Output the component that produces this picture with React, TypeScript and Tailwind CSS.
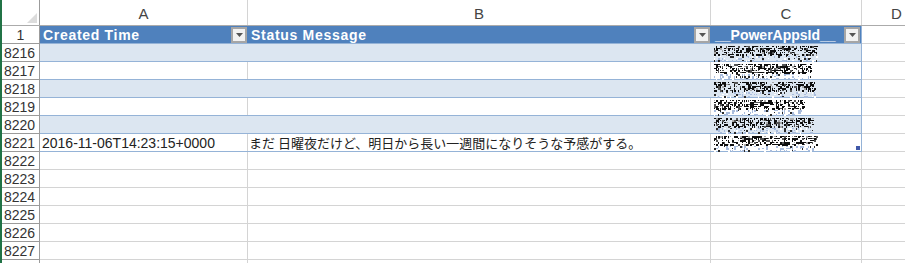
import React from "react";

// column widths: row header, A, B, C, D
const W = { rh: "w-[38px]", a: "w-[208px]", b: "w-[463px]", c: "w-[151px]", d: "w-[70px]" };

function rng(seed: number) {
  let s = seed;
  return () => {
    s = (s * 1103515245 + 12345) & 0x7fffffff;
    return s / 0x7fffffff;
  };
}

// pixelated noise that hides the ids in column C
function Noise({ seed, len }: { seed: number; len: number }) {
  const r = rng(seed);
  const px: React.ReactNode[] = [];
  for (let y = 2; y < 18; y += 2) {
    for (let x = 0; x < len; x += 2) {
      const v = r();
      let fill = "";
      if (y <= 11) {
        if (v < 0.55) fill = "#0e0e0e";
        else if (v < 0.68) fill = "#555";
        else if (v < 0.76) fill = "#a8a8a8";
      } else {
        if (v < 0.25) fill = "#a9bcdc";
        else if (v < 0.4) fill = "#ffffff";
        else if (v < 0.5) fill = "#2a2a2a";
      }
      if (!fill) continue;
      const w = r() < 0.4 ? 1 : 2;
      const h = r() < 0.4 ? 1 : 2;
      px.push(<rect key={`${x}-${y}`} x={x} y={y} width={w} height={h} fill={fill} />);
    }
  }
  return (
    <svg width={len} height={18} className="absolute left-[3px] top-0 overflow-visible" shapeRendering="crispEdges">
      {px}
    </svg>
  );
}

function Drop() {
  return (
    <div className="ml-auto mr-[1px] flex h-[16px] w-[16px] shrink-0 items-center justify-center border-2 border-[#a6a6a6] bg-[#f2f2f2]">
      <svg width="7" height="4" viewBox="0 0 7 4">
        <path d="M0 0h7L3.5 4z" fill="#555" />
      </svg>
    </div>
  );
}

const rows = [8216, 8217, 8218, 8219, 8220, 8221, 8222, 8223, 8224, 8225, 8226, 8227, 0];

export default function App() {
  return (
    <div className="h-[263px] w-[905px] overflow-hidden bg-white font-['Liberation_Sans','Noto_Sans_CJK_JP',sans-serif] text-[14px] leading-none text-[#222]">
      <div className="border-l-2 border-[#217346]">
        {/* column letters */}
        <div className="flex h-[26px] border-b border-[#ababab] text-[15px] text-[#444]">
          <div className={`${W.rh} relative shrink-0 border-r border-[#9b9b9b]`}>
            <svg className="absolute right-[2px] bottom-[2px]" width="10" height="10" viewBox="0 0 10 10">
              <path d="M10 0V10H0z" fill="#dcdcdc" />
            </svg>
          </div>
          <div className={`${W.a} flex shrink-0 items-end justify-center border-r border-[#d4d4d4] pb-[4px]`}>A</div>
          <div className={`${W.b} flex shrink-0 items-end justify-center border-r border-[#d4d4d4] pb-[4px]`}>B</div>
          <div className={`${W.c} flex shrink-0 items-end justify-center border-r border-[#d4d4d4] pb-[4px]`}>C</div>
          <div className={`${W.d} flex shrink-0 items-end justify-center border-r border-[#d4d4d4] pb-[4px]`}>D</div>
        </div>

        {/* table header */}
        <div className="flex h-[18px]">
          <div className={`${W.rh} flex shrink-0 items-center justify-center border-r border-b border-[#9b9b9b] text-[#333]`}>1</div>
          <div className="flex shrink-0 border-b border-[#95b3d7] bg-[#4f81bd] font-bold tracking-[0.7px] text-white">
            <div className={`${W.a} flex items-center pl-[3px]`}>
              Created Time
              <Drop />
            </div>
            <div className={`${W.b} flex items-center pl-[3px]`}>
              Status Message
              <Drop />
            </div>
            <div className={`${W.c} flex items-center border-r border-[#95b3d7] pl-[4px] tracking-normal`}>
              __PowerAppsId__
              <Drop />
            </div>
          </div>
          <div className={`${W.d} shrink-0 border-r border-b border-[#d4d4d4]`} />
        </div>

        {rows.map((n, i) => {
          const inTable = i < 6;
          const band = inTable && i % 2 === 0;
          const line = inTable ? "border-[#95b3d7]" : "border-[#d4d4d4]";
          const sep = band ? "border-[#dce6f1]" : "border-[#d4d4d4]";
          return (
            <div key={i} className="flex h-[18px]">
              <div className={`${W.rh} flex shrink-0 items-center border-r border-b border-[#9b9b9b] pl-[2px] text-[#333]`}>
                {n || ""}
              </div>
              <div className={`flex shrink-0 border-b ${line} ${band ? "bg-[#dce6f1]" : ""}`}>
                <div className={`${W.a} flex items-center border-r ${sep} pl-[2px]`}>
                  {n === 8221 ? "2016-11-06T14:23:15+0000" : ""}
                </div>
                <div className={`${W.b} flex items-center border-r ${sep} pl-[1px] font-['Noto_Sans_CJK_JP',sans-serif] text-[13px]`}>
                  {n === 8221 ? "まだ 日曜夜だけど、明日から長い一週間になりそうな予感がする。" : ""}
                </div>
                <div className={`${W.c} relative border-r ${inTable ? "border-[#95b3d7]" : "border-[#d4d4d4]"}`}>
                  {inTable && <Noise seed={n * 7 + 3} len={[104, 98, 102, 92, 100, 104][i]} />}
                  {n === 8221 && <div className="absolute right-[1px] bottom-[1px] h-[4px] w-[4px] bg-[#4058a8]" />}
                </div>
              </div>
              <div className={`${W.d} shrink-0 border-r border-b border-[#d4d4d4]`} />
            </div>
          );
        })}
      </div>
    </div>
  );
}
